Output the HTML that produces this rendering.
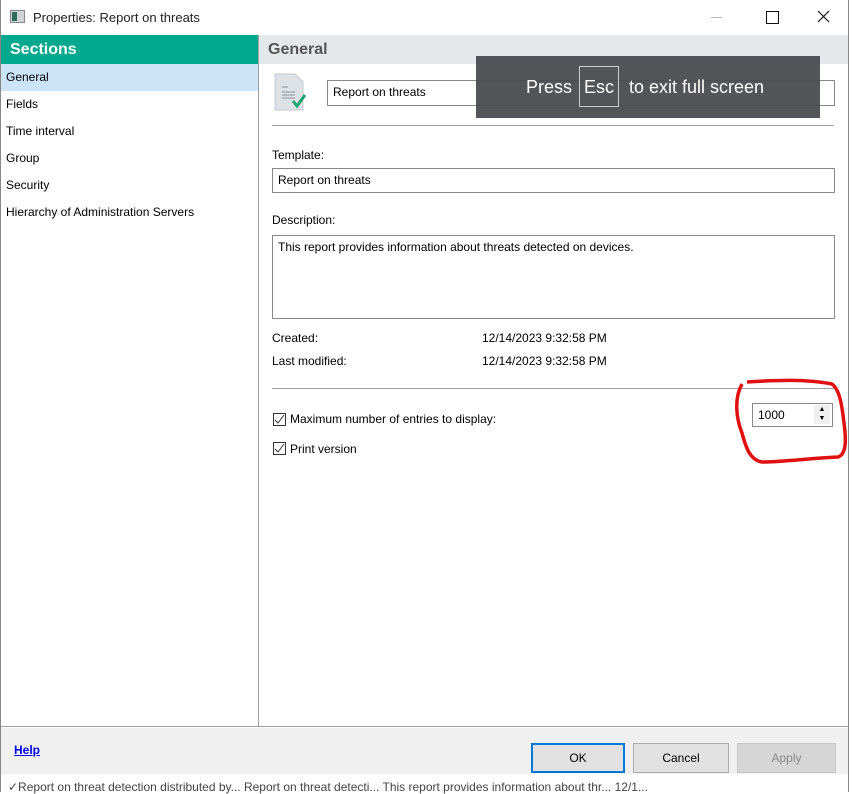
<!DOCTYPE html>
<html><head><style>
body{margin:0;width:852px;height:792px;overflow:hidden;background:#fff;font-family:"Liberation Sans",sans-serif;font-size:12px;color:#000;position:relative}
.a{position:absolute}
.inp{position:absolute;border:1px solid #8a8a8a;background:#fff;box-sizing:border-box;padding:4px 5px;font-size:12px}
.btn{position:absolute;top:743px;height:30px;border:1px solid #adadad;background:#e1e1e1;box-sizing:border-box;text-align:center;line-height:28px;font-size:12px}
.cb{position:absolute;width:13px;height:13px;border:1px solid #333;box-sizing:border-box;background:#fff}
</style></head><body>
<div class="a" style="left:0;top:0;width:849px;height:792px;border-left:1px solid #888;border-right:1px solid #888;box-sizing:border-box"></div>
<div class="a" style="left:10px;top:10px;width:15px;height:13px;background:#d0d4d8;border:1px solid #888;box-sizing:border-box"><div style="width:5px;height:9px;margin:1px;background:#2d6b5b"></div></div>
<div class="a" style="left:33px;top:10px;font-size:13px;color:#222">Properties: Report on threats</div>
<div class="a" style="left:711px;top:17px;width:11px;height:1px;background:#bbb"></div>
<div class="a" style="left:766px;top:11px;width:11px;height:11px;border:1px solid #111"></div>
<svg class="a" style="left:817px;top:10px" width="13" height="13"><path d="M1 1L12 12M12 1L1 12" stroke="#111" stroke-width="1.2"/></svg>
<div class="a" style="left:1px;top:35px;width:257px;height:29px;background:#00a88e;color:#fff;font-weight:bold;font-size:16px;line-height:29px;padding-left:9px;box-sizing:border-box">Sections</div>
<div class="a" style="left:1px;top:64px;width:257px;height:27px;background:#cce4f7"></div>
<div class="a" style="left:6px;top:70px">General</div>
<div class="a" style="left:6px;top:97px">Fields</div>
<div class="a" style="left:6px;top:124px">Time interval</div>
<div class="a" style="left:6px;top:151px">Group</div>
<div class="a" style="left:6px;top:178px">Security</div>
<div class="a" style="left:6px;top:205px">Hierarchy of Administration Servers</div>
<div class="a" style="left:258px;top:35px;width:1px;height:692px;background:#a0a0a0"></div>
<div class="a" style="left:259px;top:35px;width:589px;height:29px;background:#e4e8eb;color:#555;font-weight:bold;font-size:16px;line-height:29px;padding-left:9px;box-sizing:border-box">General</div>
<svg class="a" style="left:274px;top:73px" width="34" height="38"><path d="M1 1H21L29 9V37H1Z" fill="#dde2e6" stroke="#c4cacf"/><path d="M8 14h6M8 19h13M8 22h13M8 25h13" stroke="#8a9299"/><path d="M19 28l4 5 8-11" stroke="#1ea672" stroke-width="3" fill="none"/></svg>
<div class="inp" style="left:327px;top:80px;width:508px;height:26px">Report on threats</div>
<div class="a" style="left:272px;top:125px;width:562px;height:1px;background:#a0a0a0"></div>
<div class="a" style="left:272px;top:148px">Template:</div>
<div class="inp" style="left:272px;top:168px;width:563px;height:25px">Report on threats</div>
<div class="a" style="left:272px;top:213px">Description:</div>
<div class="inp" style="left:272px;top:235px;width:563px;height:84px">This report provides information about threats detected on devices.</div>
<div class="a" style="left:272px;top:331px">Created:</div>
<div class="a" style="left:482px;top:331px">12/14/2023 9:32:58 PM</div>
<div class="a" style="left:272px;top:354px">Last modified:</div>
<div class="a" style="left:482px;top:354px">12/14/2023 9:32:58 PM</div>
<div class="a" style="left:272px;top:388px;width:562px;height:1px;background:#a0a0a0"></div>
<div class="cb" style="left:273px;top:413px"></div>
<svg class="a" style="left:273px;top:413px" width="13" height="13"><path d="M2 7l3 3 6-8" stroke="#333" fill="none"/></svg>
<div class="a" style="left:290px;top:412px">Maximum number of entries to display:</div>
<div class="cb" style="left:273px;top:442px"></div>
<svg class="a" style="left:273px;top:442px" width="13" height="13"><path d="M2 7l3 3 6-8" stroke="#333" fill="none"/></svg>
<div class="a" style="left:290px;top:442px">Print version</div>
<div class="inp" style="left:752px;top:403px;width:81px;height:24px;padding-top:4px">1000</div>
<div class="a" style="left:814px;top:405px;width:16px;height:19px;background:#f0f0f0;font-size:7px;line-height:9px;text-align:center">▲<br>▼</div>
<svg class="a" style="left:722px;top:378px" width="128" height="90"><path d="M20 6C12 20 14 40 20 55C24 70 28 82 40 84C60 84 90 80 116 79C125 76 124 60 122 45C120 28 118 12 110 6C85 1 55 2 25 4" stroke="#e01010" stroke-width="3.5" fill="none"/></svg>
<div class="a" style="left:476px;top:56px;width:344px;height:62px;background:rgba(70,72,76,0.93)"></div>
<div class="a" style="left:526px;top:77px;color:#fff;font-size:18px">Press</div>
<div class="a" style="left:579px;top:66px;width:40px;height:41px;border:1px solid #ccc;box-sizing:border-box;color:#fff;font-size:18px;text-align:center;line-height:41px">Esc</div>
<div class="a" style="left:629px;top:77px;color:#fff;font-size:18px">to exit full screen</div>
<div class="a" style="left:1px;top:726px;width:847px;height:1px;background:#a0a0a0"></div>
<div class="a" style="left:1px;top:728px;width:847px;height:46px;background:#f0f0f0"></div>
<div class="a" style="left:14px;top:743px;color:#0000ee;font-weight:bold;text-decoration:underline">Help</div>
<div class="btn" style="left:531px;width:94px;border:2px solid #0078d7;line-height:26px">OK</div>
<div class="btn" style="left:633px;width:96px">Cancel</div>
<div class="btn" style="left:737px;width:99px;color:#8a8a8a;background:#d6d6d6;border-color:#c8c8c8">Apply</div>
<div class="a" style="left:8px;top:780px;color:#444;white-space:nowrap">✓Report on threat detection distributed by...   Report on threat detecti...   This report provides information about thr...   12/1...</div>
</body></html>
